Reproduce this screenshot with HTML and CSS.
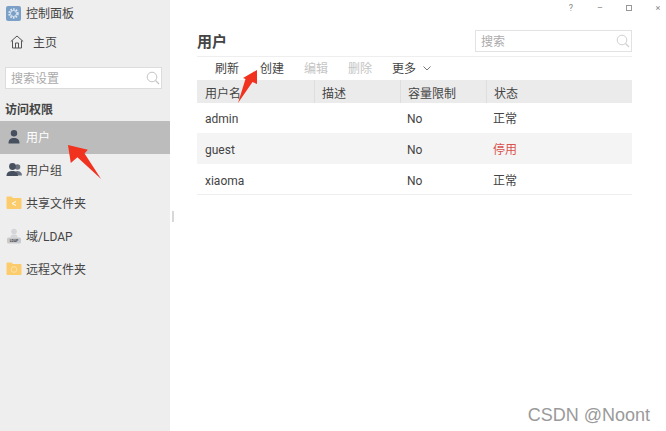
FILE: index.html
```html
<!DOCTYPE html>
<html lang="zh-CN">
<head>
    <meta charset="UTF-8">
    <meta name="viewport" content="width=device-width, initial-scale=1.0">
    <title>控制面板</title>
    <link rel="stylesheet" href="styles.css">
</head>
<body>
    <div class="window">
        <aside class="sidebar">
            <div class="app-title">
                <svg class="app-icon" viewBox="0 0 15 15"><rect width="15" height="15" rx="2" fill="#7ba0c8"/><circle cx="7.5" cy="7.5" r="4.2" fill="none" stroke="#dbe6f1" stroke-width="2" stroke-dasharray="1.6 1.1"/><circle cx="7.5" cy="7.5" r="3" fill="none" stroke="#dbe6f1" stroke-width="1"/></svg>
                <span>控制面板</span>
            </div>
            <div class="home-link">
                <svg class="home-icon" viewBox="0 0 14 14"><path d="M0.8 6.5 7 1l6.2 5.5M2.5 5.5V13h9V5.5M5.5 13V8h3v5" fill="none" stroke="#555" stroke-width="1"/></svg>
                <span>主页</span>
            </div>
            <div class="search side-search">
                <span>搜索设置</span>
                <svg class="search-icon" viewBox="0 0 14 14"><circle cx="6" cy="6" r="4.8" fill="none" stroke="#c4c4c4"/><path d="M9.5 9.5 13 13" stroke="#c4c4c4" stroke-width="1.2"/></svg>
            </div>
            <div class="side-heading">访问权限</div>
            <ul class="side-menu">
                <li class="active">
                    <svg class="side-icon" viewBox="0 0 16 16"><circle cx="8" cy="4.2" r="3.2" fill="#46505f"/><path d="M2.5 14.5c0-4 2-5.500 5.500-5.500s5.500 1.500 5.500 5.500z" fill="#46505f"/></svg>
                    <span>用户</span>
                </li>
                <li>
                    <svg class="side-icon" viewBox="0 0 16 16"><circle cx="11.500" cy="5" r="2.800" fill="#6a7280"/><path d="M10 9c3.500-.5 6 1 6 4.500h-4z" fill="#6a7280"/><circle cx="6.500" cy="4.500" r="3.400" fill="#46505f"/><path d="M.5 14c0-3.800 2.500-5 6-5s5.500 1.200 5.500 5z" fill="#46505f"/></svg>
                    <span>用户组</span>
                </li>
                <li>
                    <svg class="side-icon" viewBox="0 0 16 16"><path d="M0.500 2.500q0-1 1-1h4l1.500 1.500h7.500q1 0 1 1v9q0 1-1 1h-13q-1 0-1-1z" fill="#fbcb6c"/><path d="M6 8.500l4-2M6 8.500l4 2" stroke="#fff" stroke-width="1"/></svg>
                    <span>共享文件夹</span>
                </li>
                <li>
                    <svg class="side-icon" viewBox="0 0 16 16"><circle cx="8" cy="3.500" r="2.800" fill="#d4d6d9"/><path d="M4.500 9.500c0-2.500 1.500-3 3.500-3s3.500.5 3.500 3z" fill="#d4d6d9"/><rect x="1" y="9.500" width="14" height="6" rx="1.500" fill="#c8cacd"/><text class="ldap-label" x="8" y="14">LDAP</text></svg>
                    <span>域/LDAP</span>
                </li>
                <li>
                    <svg class="side-icon" viewBox="0 0 16 16"><path d="M0.500 2.500q0-1 1-1h4l1.500 1.500h7.500q1 0 1 1v9q0 1-1 1h-13q-1 0-1-1z" fill="#fbcb6c"/><circle cx="8" cy="8.500" r="2.800" fill="none" stroke="#fde3ad" stroke-width="1"/></svg>
                    <span>远程文件夹</span>
                </li>
            </ul>
            <div class="splitter"></div>
        </aside>
        <main class="content">
            <div class="window-controls">
                <span>?</span>
                <span>–</span>
                <span class="max-box"></span>
                <span>×</span>
            </div>
            <div class="content-head">
                <h1>用户</h1>
                <div class="search top-search">
                    <span>搜索</span>
                    <svg class="search-icon" viewBox="0 0 14 14"><circle cx="6" cy="6" r="4.800" fill="none" stroke="#d0d0d0"/><path d="M9.500 9.500 13 13" stroke="#d0d0d0" stroke-width="1.200"/></svg>
                </div>
            </div>
            <div class="toolbar">
                <span class="first-tool">刷新</span>
                <span>创建</span>
                <span class="disabled">编辑</span>
                <span class="disabled">删除</span>
                <span>更多</span>
                <svg class="chevron" viewBox="0 0 8 5"><path d="M0.500 0.500 4 4l3.500-3.500" fill="none" stroke="#777"/></svg>
            </div>
            <table class="user-table">
                <thead>
                    <tr><th class="col-name">用户名</th><th class="col-desc">描述</th><th class="col-quota">容量限制</th><th>状态</th></tr>
                </thead>
                <tbody>
                    <tr><td>admin</td><td></td><td>No</td><td class="status">正常</td></tr>
                    <tr class="striped"><td>guest</td><td></td><td>No</td><td class="status stopped">停用</td></tr>
                    <tr class="last-row"><td>xiaoma</td><td></td><td>No</td><td class="status">正常</td></tr>
                </tbody>
            </table>
        </main>
    </div>
    <!-- red arrows drawn over the screenshot -->
    <svg class="arrow arrow-user" viewBox="0 0 38 38"><path d="M1 1 22 6 18.500 10 36 37 11 14 4 20z" fill="#f0321e"/></svg>
    <svg class="arrow arrow-create" viewBox="0 0 22 36"><path d="M20 1 20 15 15.500 13 1 34 8.500 10 6 9z" fill="#f0321e"/></svg>
    <div class="watermark">CSDN @Noont</div>
</body>
</html>
```

FILE: styles.css
```css
* {
    box-sizing: border-box;
}
body {
    margin: 0;
    height: 431px;
    overflow: hidden;
    font-family: Roboto, "Noto Sans CJK SC", sans-serif;
    font-size: 12px;
    color: #444;
    background-color: white;
}
.window {
    display: flex;
    height: 431px;
}
.sidebar {
    position: relative;
    flex: 0 0 170px;
    background-color: #eeeeee;
}
.app-title {
    display: flex;
    align-items: center;
    gap: 5px;
    height: 26px;
    padding-left: 6px;
    color: #444;
}
.app-title span, .home-link span, .search span, .side-menu span, .toolbar span {
    padding-bottom: 2px;
}
.app-icon {
    width: 15px;
    height: 15px;
}
.home-link {
    display: flex;
    align-items: center;
    gap: 9px;
    height: 32px;
    padding-left: 10px;
}
.home-icon {
    width: 14px;
    height: 14px;
}
.search {
    display: flex;
    align-items: center;
    justify-content: space-between;
    background-color: white;
    border: 1px solid #dcdcdc;
    color: #aaa;
}
.side-search {
    width: 157px;
    height: 22px;
    margin: 9px 0 0 5px;
    padding: 0 1px 0 5px;
}
.search-icon {
    width: 14px;
    height: 14px;
}
.side-heading {
    height: 32px;
    padding: 12px 0 0 5px;
    font-weight: bold;
    line-height: 18px;
    color: #444;
}
.side-menu {
    margin: 0;
    padding: 0;
    list-style: none;
}
.side-menu li {
    display: flex;
    align-items: center;
    gap: 4px;
    height: 33px;
    padding: 0 0 1px 6px;
}
.side-menu li.active {
    background-color: #bcbcbc;
    color: white;
}
.side-icon {
    width: 16px;
    height: 16px;
}
.ldap-label {
    font-size: 3.500px;
    font-weight: bold;
    text-anchor: middle;
    fill: #444;
}
.splitter {
    position: absolute;
    top: 211px;
    right: -4px;
    width: 2px;
    height: 11px;
    background-color: #d8d8d8;
}
.content {
    position: relative;
    flex: 1;
    padding: 30px 34px 0 27px;
}
.window-controls {
    position: absolute;
    top: 1px;
    right: 5px;
    display: flex;
    align-items: center;
    gap: 23px;
    height: 14px;
    font-size: 9px;
    color: #888;
}
.window-controls span {
    width: 6px;
    text-align: center;
}
.window-controls .max-box {
    height: 6px;
    border: 1px solid #999;
}
.content-head {
    display: flex;
    justify-content: space-between;
    height: 27px;
    border-bottom: 1px solid #eeeeee;
}
.content-head h1 {
    margin: 0;
    font-size: 15px;
    font-weight: bold;
    line-height: 24px;
    color: #444;
}
.top-search {
    width: 157px;
    height: 22px;
    padding: 0 1px 0 5px;
    border-color: #e2e2e2;
}
.toolbar {
    display: flex;
    align-items: center;
    gap: 20px;
    height: 23px;
    padding: 0 0 1px 18px;
}
.toolbar .first-tool {
    margin-right: 1px;
}
.toolbar .disabled {
    color: #c4c4c4;
}
.chevron {
    width: 8px;
    height: 5px;
    margin-left: -13px;
}
.user-table {
    width: 435px;
    table-layout: fixed;
    border-collapse: separate;
    border-spacing: 0;
    border-bottom: 1px solid #eeeeee;
}
.user-table th {
    height: 23px;
    padding: 2px 0 0 7px;
    font-weight: normal;
    text-align: left;
    background-color: #ebebeb;
    border-left: 1px solid #dedede;
}
.user-table th:first-child {
    padding-left: 8px;
    border-left: none;
}
.user-table td {
    height: 30px;
    padding: 2px 0 0 7px;
}
.user-table td:first-child {
    padding-left: 8px;
}
.col-name {
    width: 117px;
}
.col-desc {
    width: 86px;
}
.col-quota {
    width: 86px;
}
.user-table .striped td {
    height: 31px;
    padding-top: 3px;
    background-color: #f4f4f4;
}
.user-table .last-row td {
    padding-top: 3px;
}
.user-table td.status {
    padding-top: 0;
    padding-bottom: 2px;
}
.user-table .striped td.status {
    padding-top: 1px;
}
.user-table .last-row td.status {
    padding-top: 1px;
    padding-bottom: 1px;
}
.user-table .stopped {
    color: #d9534f;
}
.arrow {
    position: absolute;
}
.arrow-user {
    left: 67px;
    top: 144px;
    width: 36px;
    height: 36px;
}
.arrow-create {
    left: 237px;
    top: 69px;
    width: 22px;
    height: 36px;
}
.watermark {
    position: absolute;
    right: 16px;
    top: 403px;
    font-family: "Liberation Sans", sans-serif;
    font-size: 18px;
    line-height: 24px;
    color: #9a9a9a;
}
```
